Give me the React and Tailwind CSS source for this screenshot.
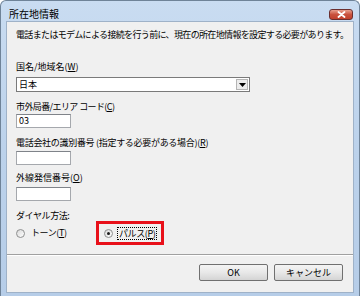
const jp = { fontFamily: '"Noto Sans CJK JP", "Noto Sans", sans-serif' };

const Label = ({ children, className = "" }) => (
    <div className={"h-[12px] leading-[12px] text-[9px] text-black whitespace-nowrap " + className}>
        {children}
    </div>
);

const TextBox = ({ value, className = "" }) => (
    <div
        className={
            "w-[55px] h-[14px] bg-white border border-[#a5a8ad] border-t-[#7f8389] pl-[2px] text-[9px] leading-[12px] " +
            className
        }
    >
        {value}
    </div>
);

const Radio = ({ checked }) => (
    <span className="w-[9px] h-[9px] rounded-full border border-[#8e8f8f] bg-gradient-to-br from-[#d8d8d8] to-white flex items-center justify-center shrink-0">
        {checked && <span className="w-[3px] h-[3px] rounded-full bg-[#1a1a1a]" />}
    </span>
);

const Button = ({ children }) => (
    <div className="w-[69px] h-[17px] rounded-[2px] border border-[#707070] bg-gradient-to-b from-[#f4f4f4] via-[#e8e8e8] to-[#d4d4d4] flex items-center justify-center text-[9px] leading-[12px] text-black">
        {children}
    </div>
);

export default function App() {
    return (
        <div className="w-[360px] h-[296px] bg-white" style={jp}>
            <div className="w-[360px] h-[296px] rounded-t-[6px] border border-b-0 border-[#6f8398] bg-gradient-to-b from-[#c9dcf1] via-[#bcd2eb] to-[#b6cde8] flex flex-col">
                {/* title bar */}
                <div className="h-[20px] flex items-start shrink-0">
                    <div className="pl-[8px] pt-[7px] text-[10px] leading-[12px] text-black">所在地情報</div>
                    <div className="ml-auto mr-[6px] mt-[8px] w-[24px] h-[11px] rounded-[3px] border border-[#6b2f2f] bg-gradient-to-b from-[#e8a08f] via-[#c9523e] to-[#c1402c] flex items-center justify-center">
                        <svg width="9" height="7" viewBox="0 0 9 7">
                            <path d="M1.5 1 L7.5 6 M7.5 1 L1.5 6" stroke="#fff" strokeWidth="1.8" strokeLinecap="round" />
                        </svg>
                    </div>
                </div>

                {/* client area */}
                <div className="mx-[5px] h-[272px] bg-[#f0f0f0] border border-[#9fb2c8] pl-[9px] flex flex-col">
                    <Label className="mt-[7px] tracking-[-0.65px]">
                        電話またはモデムによる接続を行う前に、現在の所在地情報を設定する必要があります。
                    </Label>

                    <Label className="mt-[20px]">
                        国名/地域名(<u>W</u>)
                    </Label>
                    <div className="mt-[4px] w-[234px] h-[15px] bg-white border border-[#7a7a7a] flex items-center">
                        <span className="pl-[2px] text-[9px] leading-[12px]">日本</span>
                        <div className="ml-auto mr-px w-[12px] h-[11px] bg-[#ececec] border border-[#b5b5b5] flex items-center justify-center">
                            <svg width="7" height="4" viewBox="0 0 7 4">
                                <path d="M0 0 H7 L3.5 4 Z" fill="#000" />
                            </svg>
                        </div>
                    </div>

                    <Label className="mt-[9px] tracking-[-0.6px]">
                        市外局番/エリア コード(<u>C</u>)
                    </Label>
                    <TextBox value="03" className="mt-[1px]" />

                    <Label className="mt-[9px] tracking-[-0.3px]">
                        電話会社の識別番号 (指定する必要がある場合)(<u>R</u>)
                    </Label>
                    <TextBox className="mt-[2px]" />

                    <Label className="mt-[7px]">
                        外線発信番号(<u>O</u>)
                    </Label>
                    <TextBox className="mt-[3px]" />

                    <Label className="mt-[9px] tracking-[-0.4px]">ダイヤル方法:</Label>
                    <div className="mt-[-1px] h-[24px] flex items-center">
                        <div className="w-[80px] flex items-center gap-[6px]">
                            <Radio />
                            <span className="text-[9px] leading-[12px] tracking-[-0.4px]">
                                トーン(<u>T</u>)
                            </span>
                        </div>
                        <div className="w-[68px] h-[24px] border-[3px] border-[#e8101a] pl-[5px] flex items-center gap-[4px]">
                            <Radio checked />
                            <span className="border border-dotted border-black px-px text-[9px] leading-[11px] tracking-[-0.4px]">
                                パルス(<u>P</u>)
                            </span>
                        </div>
                    </div>

                    <div className="mt-[9px] -ml-[9px] border-t border-[#a0a0a0] border-b border-b-white" />

                    <div className="mt-[8px] pr-[10px] flex justify-end gap-[6px]">
                        <Button>OK</Button>
                        <Button>キャンセル</Button>
                    </div>
                </div>
            </div>
        </div>
    );
}
